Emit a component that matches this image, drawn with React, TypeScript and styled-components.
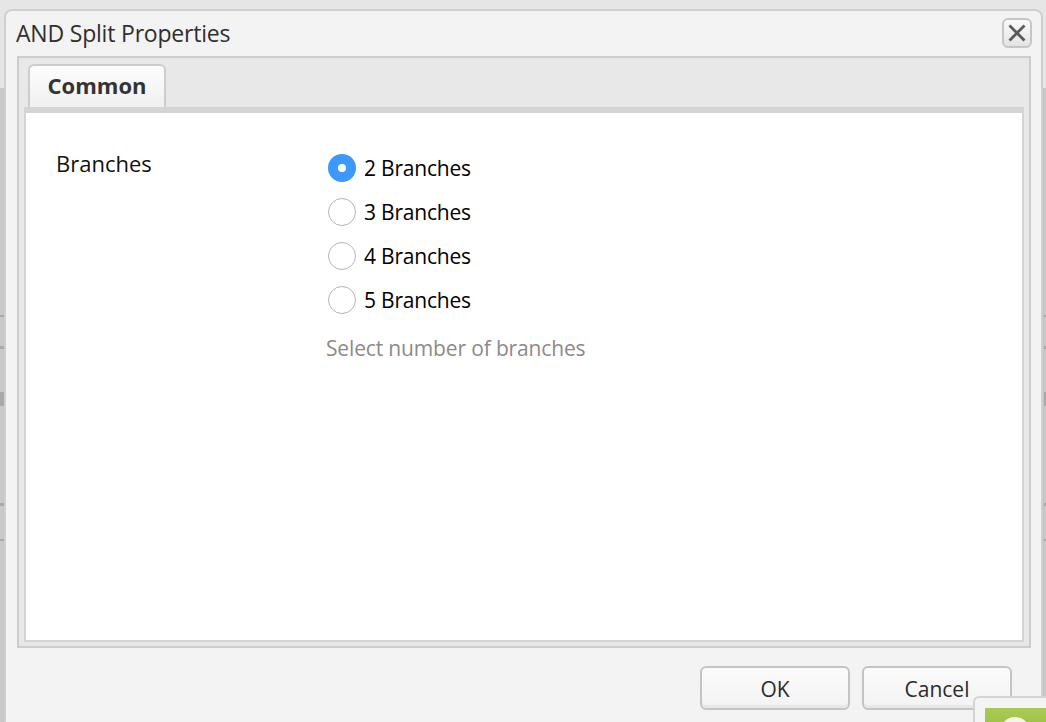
import React from 'react';
import styled, { createGlobalStyle } from 'styled-components';

const GlobalStyle = createGlobalStyle`
    html, body {
        margin: 0;
        padding: 0;
        height: 100%;
        overflow: hidden;
        background: #e6e6e6;
    }
    body {
        font-family: "Open Sans", "Liberation Sans", sans-serif;
    }
`;

const branches = [2, 3, 4, 5];
const backdropTicks = [
    { top: 315, height: 2 },
    { top: 346, height: 3 },
    { top: 392, height: 14 },
    { top: 503, height: 3 },
    { top: 539, height: 2 },
];

const App = () => {
    return (
        <Page>
            <GlobalStyle />
            {backdropTicks.map((tick) => (
                <React.Fragment key={tick.top}>
                    <Tick $top={tick.top} $height={tick.height} $side="left" />
                    <Tick $top={tick.top} $height={tick.height} $side="right" />
                </React.Fragment>
            ))}

            <Dialog>
                <Header>
                    <Title>AND Split Properties</Title>
                    <CloseButton aria-label="Close">
                        <svg width="20" height="20" viewBox="0 0 20 20">
                            <path d="M2.5 2.5 L17.5 17.5 M17.5 2.5 L2.5 17.5" stroke="#5a5a5a" strokeWidth="2.8" fill="none" />
                        </svg>
                    </CloseButton>
                </Header>

                <TabPanel>
                    <TabStrip>
                        <Tab>Common</Tab>
                    </TabStrip>
                    <Content>
                        <FieldLabel>Branches</FieldLabel>
                        <Field>
                            {branches.map((count) => (
                                <RadioRow key={count}>
                                    <Radio $checked={count === 2} />
                                    <RadioLabel>{count} Branches</RadioLabel>
                                </RadioRow>
                            ))}
                            <Hint>Select number of branches</Hint>
                        </Field>
                    </Content>
                </TabPanel>

                <Footer>
                    <Button>OK</Button>
                    <Button>Cancel</Button>
                </Footer>
            </Dialog>

            <Notification>
                <NotificationInner>
                    <NotificationDot />
                </NotificationInner>
            </Notification>
        </Page>
    )
}


const Page = styled.div`
    position: relative;
    width: 1046px;
    height: 722px;
    overflow: hidden;
    padding: 9px 3px 0 4px;
    box-sizing: border-box;
    background:
        linear-gradient(to right, #cacaca 0, #c6c6c6 4px, #bcbcbc 5px) 0 88px / 5px 634px no-repeat,
        linear-gradient(to left, #cacaca 0, #c6c6c6 2px, #bcbcbc 4px) 100% 88px / 4px 634px no-repeat,
        #e6e6e6;
`;

const Tick = styled.div<{ $top: number; $height: number; $side: 'left' | 'right' }>`
    position: absolute;
    top: ${(p) => p.$top}px;
    ${(p) => p.$side}: 0;
    width: ${(p) => (p.$side === 'left' ? 4 : 2)}px;
    height: ${(p) => p.$height}px;
    background: #a9a9a9;
`;

const Dialog = styled.div`
    position: relative;
    height: 760px;
    box-sizing: border-box;
    background: #f3f3f3;
    border: 2px solid #cfcfcf;
    border-radius: 8px 8px 0 0;
    padding: 0 10px 0 11px;
    display: flex;
    flex-direction: column;
`;

const Header = styled.div`
    height: 45px;
    flex: none;
    display: flex;
    align-items: center;
    justify-content: space-between;
`;

const Title = styled.div`
    font-size: 23px;
    color: #2f2f2f;
    letter-spacing: -0.2px;
    margin-top: -1px;
    margin-left: -1px;
`;

const CloseButton = styled.button`
    width: 30px;
    height: 30px;
    margin: -2px -1px 0 0;
    padding: 0;
    display: flex;
    align-items: center;
    justify-content: center;
    background: linear-gradient(#fafafa, #e4e4e4);
    border: 2px solid #c6c6c6;
    border-radius: 6px;
`;

const TabPanel = styled.div`
    height: 592px;
    flex: none;
    box-sizing: border-box;
    background: #e8e8e8;
    border: 2px solid #cdcdcd;
    padding: 0 5px 4px 5px;
    display: flex;
    flex-direction: column;
`;

const TabStrip = styled.div`
    height: 49px;
    flex: none;
    display: flex;
    align-items: flex-end;
    padding-left: 4px;
`;

const Tab = styled.div`
    width: 138px;
    height: 43px;
    box-sizing: border-box;
    padding-bottom: 4px;
    background: linear-gradient(#fdfdfd, #f0f0f0);
    border: 2px solid #cdcdcd;
    border-bottom: none;
    border-radius: 6px 6px 0 0;
    display: flex;
    align-items: center;
    justify-content: center;
    font-size: 22px;
    font-weight: 700;
    color: #333;
`;

const Content = styled.div`
    flex: 1;
    box-sizing: border-box;
    background: #fff;
    border-top: 6px solid #d4d4d4;
    border-left: 2px solid #d4d4d4;
    border-right: 2px solid #d4d4d4;
    border-bottom: 2px solid #d4d4d4;
    padding: 35px 0 0 30px;
    display: flex;
`;

const FieldLabel = styled.div`
    width: 272px;
    font-size: 22px;
    color: #111;
    line-height: 30px;
`;

const Field = styled.div`
    display: flex;
    flex-direction: column;
    margin-top: -1px;
`;

const RadioRow = styled.label`
    height: 44px;
    display: flex;
    align-items: center;
    gap: 8px;
    margin-top: -1px;
    margin-bottom: 1px;
`;

const Radio = styled.span<{ $checked: boolean }>`
    width: 28px;
    height: 28px;
    box-sizing: border-box;
    border-radius: 50%;
    background: ${(p) => (p.$checked ? '#3b99fc' : '#fff')};
    border: ${(p) => (p.$checked ? 'none' : '1.5px solid #b4b4b4')};
    position: relative;

    &::after {
        content: '';
        display: ${(p) => (p.$checked ? 'block' : 'none')};
        position: absolute;
        left: 10px;
        top: 10px;
        width: 8px;
        height: 8px;
        border-radius: 50%;
        background: #fff;
    }
`;

const RadioLabel = styled.span`
    font-size: 21px;
    color: #000;
    letter-spacing: -0.2px;
`;

const Hint = styled.div`
    font-size: 21px;
    color: #8d8a88;
    letter-spacing: -0.15px;
    margin: 11px 0 0 -2px;
`;

const Footer = styled.div`
    display: flex;
    justify-content: flex-end;
    gap: 12px;
    padding: 18px 19px 0 0;
`;

const Button = styled.button`
    width: 150px;
    height: 44px;
    padding: 2px 0 0;
    background: linear-gradient(#fbfbfb, #f3f3f3);
    border: 2px solid #c4c4c4;
    border-radius: 6px;
    box-shadow: inset 0 -3px 0 #e8e8e8;
    font-family: inherit;
    font-size: 21px;
    color: #2b2b2b;
`;

const Notification = styled.div`
    position: absolute;
    left: 973px;
    top: 696px;
    width: 90px;
    height: 40px;
    box-sizing: border-box;
    background: #f4f4f4;
    border: 2px solid #d4d4d4;
    border-radius: 6px;
    padding: 10px 0 0 10px;
`;

const NotificationInner = styled.div`
    height: 40px;
    background: linear-gradient(#a9cb55, #8fb52f);
    position: relative;
`;

const NotificationDot = styled.div`
    position: absolute;
    left: 15px;
    top: 9px;
    width: 30px;
    height: 30px;
    border-radius: 50%;
    background: #f4f7e8;
`;

export default App
